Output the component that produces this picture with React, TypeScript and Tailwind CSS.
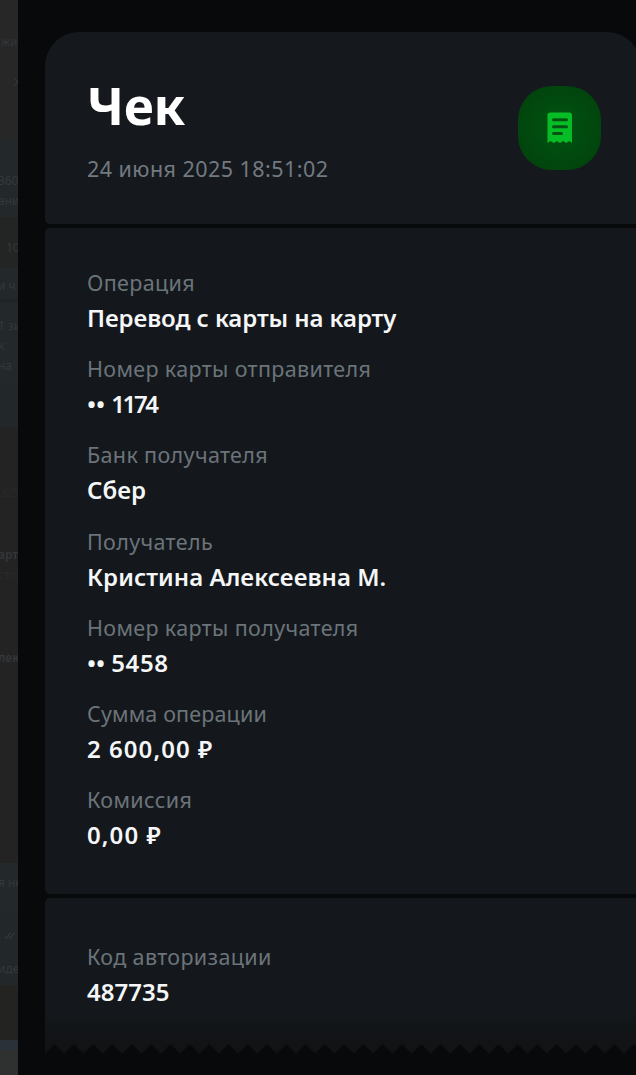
import React from "react";

type Field = { label: string; value: string; masked?: boolean; labelTrack?: string; valueTrack?: string };

const details: Field[] = [
  { label: "Операция", value: "Перевод с карты на карту", valueTrack: "tracking-[-0.08px]" },
  { label: "Номер карты отправителя", value: "1174", masked: true, valueTrack: "tracking-[-2.4px]" },
  { label: "Банк получателя", value: "Сбер" },
  { label: "Получатель", value: "Кристина Алексеевна М.", valueTrack: "tracking-[0.06px]" },
  { label: "Номер карты получателя", value: "5458", masked: true, valueTrack: "tracking-[0.6px]" },
  { label: "Сумма операции", value: "2 600,00 ₽", labelTrack: "tracking-[0.15px]", valueTrack: "tracking-[1.05px]" },
  { label: "Комиссия", value: "0,00 ₽", valueTrack: "tracking-[1.1px]" },
];

// Dimmed chat that peeks out to the left of the receipt
const chatStrip = [
  { box: "h-[140px] bg-[#262726] pt-[32px] pl-[3px]", lines: ["жи"] },
  { box: "h-[77px] bg-[#23282b] pt-[31px]", lines: ["360", "ани"] },
  { box: "h-[51px] bg-[#232424] pt-[21px] pl-2 text-[#2a2b2b]", lines: ["10"] },
  { box: "h-[35px] bg-[#23282b] pt-[8px] border-b-4 border-[#202427]", lines: ["и ч"] },
  { box: "h-[80px] bg-[#23282b] pt-[13px]", lines: ["1 зи", "к", "на"] },
  { box: "h-[44px] bg-[#22272a]", lines: [] },
  { box: "h-[118px] bg-[#232323] pt-[56px] text-[#282828]", lines: ["005"] },
  { box: "h-[20px] bg-[#232323] text-[8px] font-semibold", lines: ["арты"] },
  { box: "h-[83px] bg-[#232323] text-[8px] text-[#292929]", lines: ["стор"] },
  { box: "h-[215px] bg-[#232323] text-[8px] font-semibold", lines: ["лексе"] },
  { box: "h-[48px] bg-[#23282b] pt-[10px]", lines: ["я не"] },
  { box: "h-[48px] bg-[#22272a] pt-[15px] pl-[5px] tracking-[-6px]", lines: ["✓✓"] },
  { box: "h-[26px] bg-[#22272a] leading-[20px]", lines: ["иде"] },
  { box: "h-[55px] bg-[#232422]", lines: [] },
  { box: "h-[10px] bg-[#2a3138]", lines: [] },
  { box: "h-[25px] bg-[#2f3030]", lines: [] },
];

const Chevron = () => (
  <svg viewBox="0 0 8 10" className="ml-[9px] mt-[25px] w-2 h-[10px]" fill="none" stroke="#3a3b3b">
    <path d="M2 1L6 5L2 9" />
  </svg>
);

const ReceiptIcon = () => (
  <svg viewBox="0 0 26 32" className="w-[26px] h-[32px]">
    <path
      d="M3 0.5H22.5Q25 0.5 25 3V31L22.3 29L19.3 31L16.1 29L13 31L9.9 29L6.7 31L3.6 29L0.5 31V3Q0.5 0.5 3 0.5Z"
      fill="#06bd26"
    />
    <path d="M6.5 7.7H19.5M6.5 14.7H19.5M6.5 21.5H14.5" stroke="#035413" strokeWidth="3" strokeLinecap="round" />
  </svg>
);

// Torn bottom edge of the paper
const TornEdge = () => (
  <svg className="block w-full h-[10px]">
    <defs>
      <pattern id="teeth" x="0" y="0" width="19.3" height="10" patternUnits="userSpaceOnUse">
        <path d="M0 0H19.3V9.5L9.65 0L0 9.5Z" fill="#111315" />
      </pattern>
    </defs>
    <rect width="100%" height="10" fill="url(#teeth)" />
  </svg>
);

const Row = ({ label, value, masked, labelTrack = "tracking-[0.35px]", valueTrack = "tracking-normal" }: Field) => (
  <div className="h-[86.2px] whitespace-nowrap">
    <dt className={`text-[21.5px] leading-[30px] text-[#6b747a] ${labelTrack}`}>{label}</dt>
    <dd className="mt-[5px] text-[24px] leading-[30px] font-semibold text-[#f5f6f7]">
      {masked && <span>••&nbsp;</span>}
      <span className={valueTrack}>{value}</span>
    </dd>
  </div>
);

export default function App() {
  return (
    <div className="flex w-[636px] h-[1075px] overflow-hidden bg-[#07090b] font-['Noto_Sans','Open_Sans',sans-serif]">
      <aside className="w-[18px] shrink-0 overflow-hidden">
        {chatStrip.map((part, i) => (
          <div key={i} className={`overflow-hidden whitespace-nowrap text-[12px] leading-[20px] text-[#34383a] ${part.box}`}>
            {part.lines.map((line, j) => (
              <p key={j} className="h-5 leading-5 -ml-0.5">{line}</p>
            ))}
            {i === 0 && <Chevron />}
          </div>
        ))}
      </aside>

      <main className="ml-[27px] mt-[32px] w-[596px] shrink-0 flex flex-col">
        <header className="h-[192px] rounded-t-[34px] rounded-b-[5px] bg-[#15181c] flex items-start justify-between pl-[42px] pr-[40px]">
          <div className="pt-[43px] whitespace-nowrap">
            <h1 className="text-[51.5px] leading-[60px] font-bold text-white tracking-[-0.3px]">Чек</h1>
            <p className="mt-[19px] text-[21.5px] leading-[30px] text-[#727a81] tracking-[0.45px]">24 июня 2025 18:51:02</p>
          </div>
          <div className="mt-[54px] w-[83px] h-[84px] rounded-[34px] bg-[radial-gradient(circle,#025312,#00400b)] flex items-center justify-center">
            <ReceiptIcon />
          </div>
        </header>

        <section className="mt-[4px] h-[666px] rounded-[5px] bg-[#14181c] pl-[42px] pt-[40px]">
          <dl>
            {details.map((field) => (
              <Row key={field.label} {...field} />
            ))}
          </dl>
        </section>

        <section className="mt-[4px] h-[146px] rounded-t-[5px] bg-[linear-gradient(#14181c_0px,#14181c_110px,#111315_146px)] pl-[42px] pt-[44px]">
          <dl>
            <Row label="Код авторизации" value="487735" />
          </dl>
        </section>
        <TornEdge />
      </main>
    </div>
  );
}
